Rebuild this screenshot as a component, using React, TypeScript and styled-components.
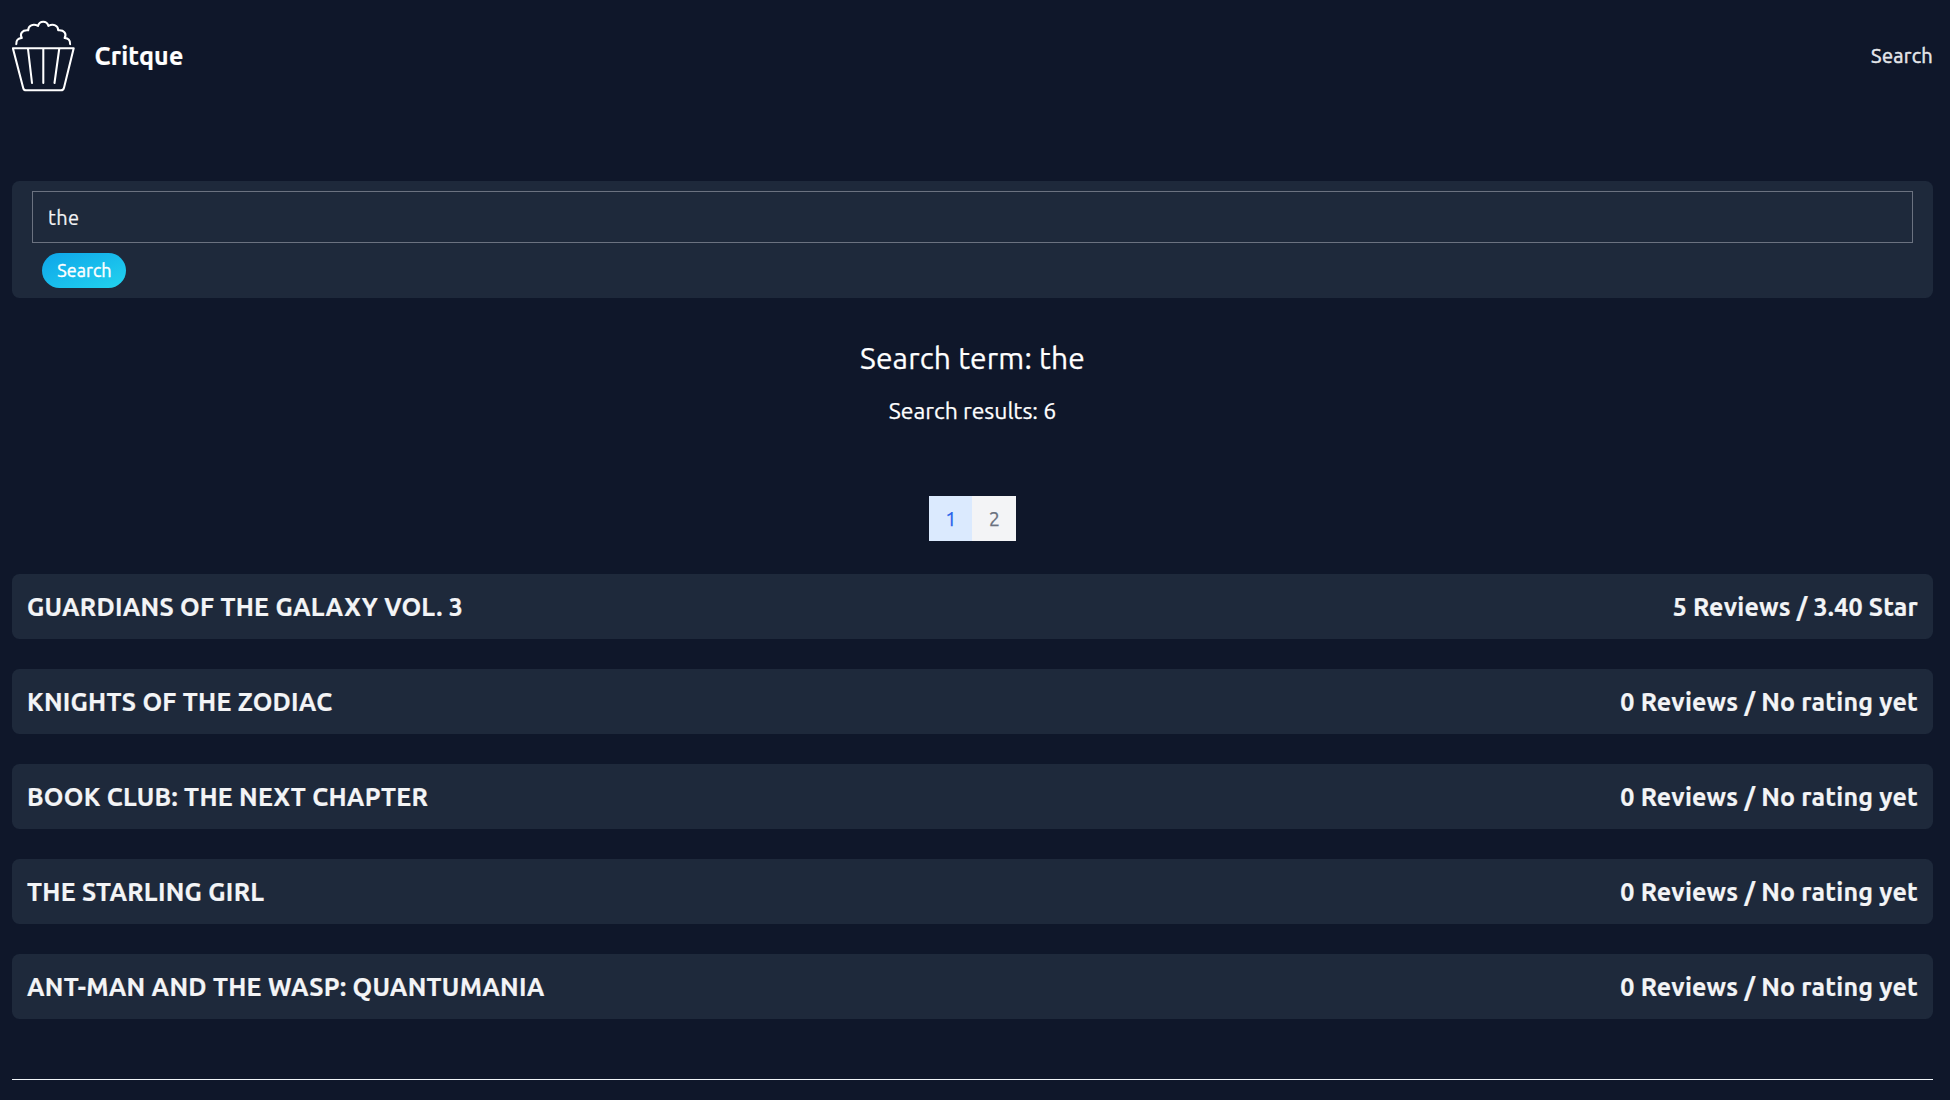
import React from "react";
import styled, { createGlobalStyle } from "styled-components";

const GlobalStyle = createGlobalStyle`
  *, *::before, *::after { box-sizing: border-box; }
  body {
    margin: 0;
    background: #0f172a;
    color: #fff;
    font-family: Ubuntu, "Noto Sans", sans-serif;
    font-size: 20px;
    line-height: 30px;
    overflow: hidden;
  }
`;

const Page = styled.div`
  display: flex;
  flex-direction: column;
  height: 1100px;
  padding: 0 17px 0 12px;
`;

const Header = styled.header`
  display: flex;
  align-items: center;
  justify-content: space-between;
  height: 112px;
  flex: none;
`;

const Brand = styled.a`
  display: flex;
  align-items: center;
  gap: 18.5px;
  font-size: 25px;
  font-weight: 700;
  letter-spacing: 0.2px;
  -webkit-text-stroke: 0.2px currentColor;
`;

const Logo = styled.svg`
  display: block;
  width: 64px;
  height: 74px;
  fill: none;
  stroke: #fff;
  stroke-width: 2.05;
  stroke-linecap: round;
  stroke-linejoin: round;
`;

const NavLink = styled.a`
  padding-bottom: 1px;
  color: #e5e7eb;
  font-size: 20px;
  letter-spacing: 0.3px;
  -webkit-text-stroke: 0.5px currentColor;
`;

const SearchPanel = styled.form`
  display: flex;
  flex-direction: column;
  align-items: flex-start;
  gap: 10px;
  flex: none;
  margin: 69px 0 0;
  padding: 10px 20px;
  border-radius: 7.5px;
  background: #1e293b;
`;

const SearchInput = styled.input`
  width: 100%;
  height: 52px;
  padding: 0 15px;
  border: 1px solid #6b7280;
  border-radius: 0;
  outline: none;
  background: transparent;
  color: #f3f4f6;
  font: inherit;
  letter-spacing: 0.3px;
  -webkit-text-stroke: 0.2px currentColor;
`;

const SearchButton = styled.button`
  width: 84px;
  height: 35px;
  margin-left: 10px;
  padding: 0 0 0 1px;
  border: 0;
  border-radius: 18px;
  background: linear-gradient(to bottom right, #0ea5e9, #22d3ee);
  color: #fff;
  font: 400 18px/25px Ubuntu, "Noto Sans", sans-serif;
  letter-spacing: 0.05px;
  -webkit-text-stroke: 0.4px currentColor;
`;

const Summary = styled.section`
  display: flex;
  flex-direction: column;
  align-items: center;
  gap: 15px;
  flex: none;
  margin-top: 40px;
  -webkit-text-stroke: 0.25px currentColor;
`;

const Term = styled.h1`
  margin: 0;
  font-size: 30px;
  font-weight: 400;
  line-height: 40px;
  letter-spacing: 0.17px;
`;

const Count = styled.h2`
  margin: 0;
  font-size: 23px;
  font-weight: 400;
  line-height: 35px;
  letter-spacing: -0.03px;
`;

const Pagination = styled.nav`
  display: flex;
  justify-content: center;
  flex: none;
  margin: 68px 0 33px;
  -webkit-text-stroke: 0.25px currentColor;
`;

const PageLink = styled.a<{ $active?: boolean }>`
  display: flex;
  align-items: center;
  justify-content: center;
  width: ${(p) => (p.$active ? 43 : 44)}px;
  height: 45px;
  padding-left: 1px;
  background: ${(p) => (p.$active ? "#dbeafe" : "#f3f4f6")};
  color: ${(p) => (p.$active ? "#2563eb" : "#6b7280")};
`;

const MovieList = styled.ul`
  display: flex;
  flex-direction: column;
  gap: 30px;
  flex: none;
  margin: 0;
  padding: 0;
  list-style: none;
`;

const MovieCard = styled.li`
  display: flex;
  align-items: center;
  justify-content: space-between;
  height: 65px;
  padding: 0 15px;
  border-radius: 7.5px;
  background: #1e293b;
  color: #f3f4f6;
  font-size: 25px;
  font-weight: 700;
  -webkit-text-stroke: 0.2px currentColor;
`;

const MovieTitle = styled.span`
  text-transform: uppercase;
  letter-spacing: 0.255px;
`;

const MovieStats = styled.span`
  letter-spacing: 0.18px;
`;

const Divider = styled.hr`
  width: 100%;
  margin: 60px 0 0;
  border: 0;
  border-top: 1px solid #f1f5f9;
`;

const movies = [
  { title: "Guardians of the Galaxy Vol. 3", stats: "5 Reviews / 3.40 Star" },
  { title: "Knights of the Zodiac", stats: "0 Reviews / No rating yet" },
  { title: "Book Club: The Next Chapter", stats: "0 Reviews / No rating yet" },
  { title: "The Starling Girl", stats: "0 Reviews / No rating yet" },
  { title: "Ant-Man and the Wasp: Quantumania", stats: "0 Reviews / No rating yet" },
];

function PopcornLogo() {
  return (
    <Logo viewBox="12 18.5 64 74" aria-hidden="true">
      <path d="M16.3 43.6C16.2 40.2 18 37.8 21.8 37.6C19.4 33.2 22.2 29.2 28.2 29.8C28.2 25.2 33 22.6 38 25.4C39.6 19.8 46.8 19.8 48.4 25.4C53.4 22.6 58.2 25.2 58.2 29.8C64.2 29.2 67 33.2 64.6 37.6C68.4 37.8 70.2 40.2 70.1 43.6" />
      <path d="M12.9 47.8H73.7L64 87.2Q63.4 89.8 61 89.8H26.2Q23.8 89.8 23.2 87.4Z" />
      <path d="M28 48.5L32 82.5M43.3 48.5V82.5M59.2 48.5L54.5 82.5" />
    </Logo>
  );
}

export default function App() {
  return (
    <>
      <GlobalStyle />
      <Page>
        <Header>
          <Brand>
            <PopcornLogo />
            Critque
          </Brand>
          <NavLink>Search</NavLink>
        </Header>
        <SearchPanel>
          <SearchInput defaultValue="the" />
          <SearchButton type="button">Search</SearchButton>
        </SearchPanel>
        <Summary>
          <Term>Search term: the</Term>
          <Count>Search results: 6</Count>
        </Summary>
        <Pagination>
          <PageLink $active>1</PageLink>
          <PageLink>2</PageLink>
        </Pagination>
        <MovieList>
          {movies.map((m) => (
            <MovieCard key={m.title}>
              <MovieTitle>{m.title}</MovieTitle>
              <MovieStats>{m.stats}</MovieStats>
            </MovieCard>
          ))}
        </MovieList>
        <Divider />
      </Page>
    </>
  );
}
